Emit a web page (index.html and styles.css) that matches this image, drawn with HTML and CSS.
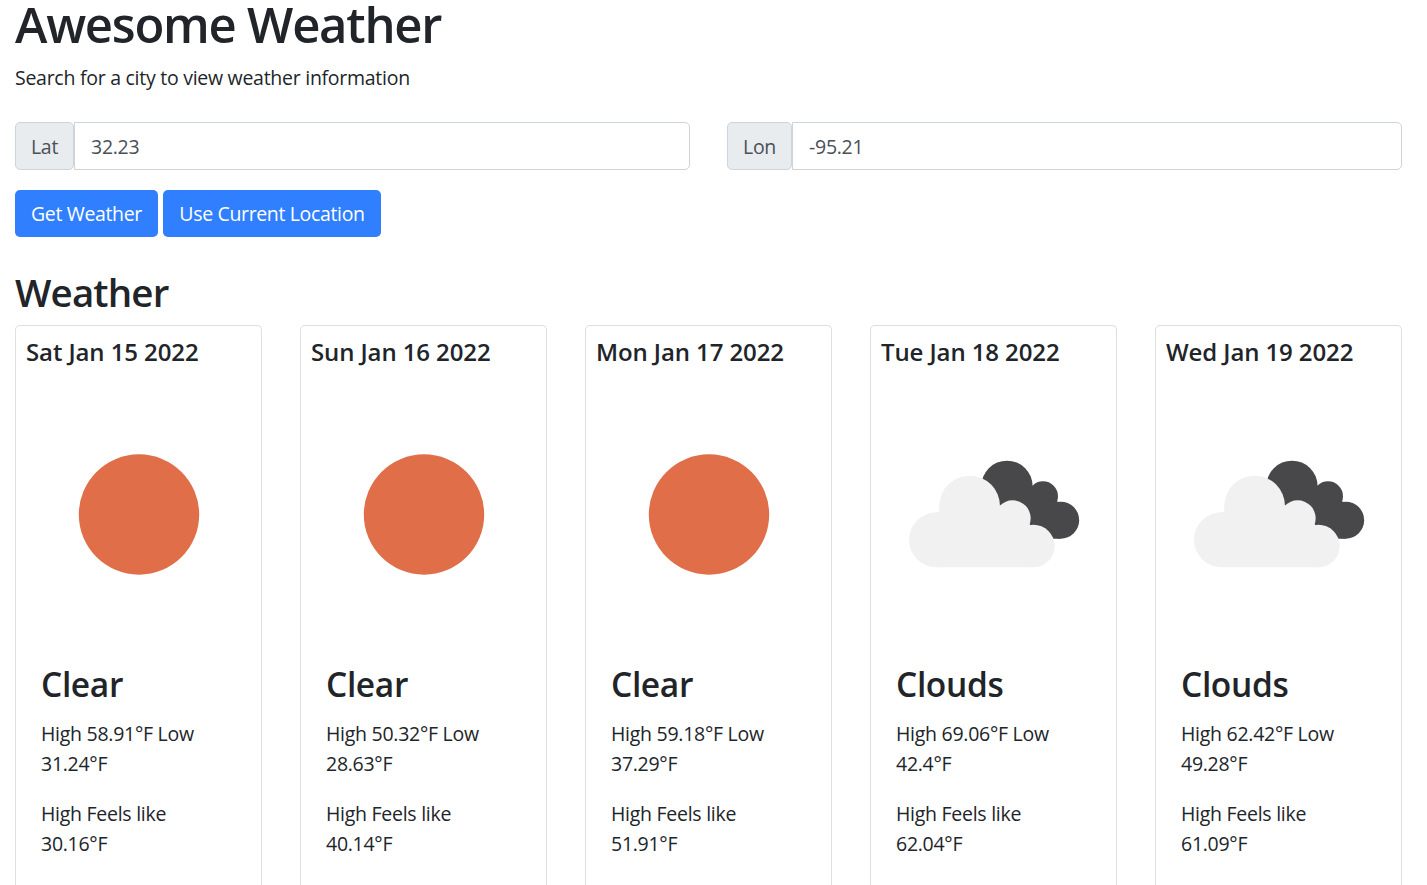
FILE: index.html
```html
<!DOCTYPE html>
<html lang="en">
<head>
<meta charset="utf-8">
<title>Awesome Weather</title>
<link rel="stylesheet" href="styles.css">
</head>
<body>
<svg class="symbols" aria-hidden="true">
  <symbol id="sun" viewBox="0 0 245 245"><circle cx="123" cy="122.5" r="60.2" fill="#e06e48"/></symbol>
  <symbol id="clouds" viewBox="-57 -144 735 735">
    <g fill="#48484a"><circle cx="351" cy="139" r="77"/><circle cx="459" cy="169" r="45"/><circle cx="512" cy="240.500" r="55.500"/><path d="M351 139H428L459 169L504 185L512 296H400L330 190Z"/></g>
    <g fill="#f1f1f1"><circle cx="139.500" cy="299.500" r="82.500"/><circle cx="239" cy="198" r="91"/><circle cx="368" cy="235" r="54"/><circle cx="430" cy="318" r="64"/><path d="M148 198H330V220H368L421 254L430 382H139V217H148Z"/></g>
  </symbol>
</svg>
<main class="page">
  <h1 class="title">Awesome Weather</h1>
  <p class="lead">Search for a city to view weather information</p>
  <form class="search">
    <div class="fields">
      <div class="group"><label class="addon addon-lat" for="lat">Lat</label><input class="input" id="lat" value="32.23"></div>
      <div class="group"><label class="addon addon-lon" for="lon">Lon</label><input class="input" id="lon" value="-95.21"></div>
    </div>
    <div class="actions">
      <button class="btn btn-get" type="button">Get Weather</button>
      <button class="btn btn-loc" type="button">Use Current Location</button>
    </div>
  </form>
  <h2 class="section">Weather</h2>
  <div class="cards">
    <article class="card"><h5 class="date">Sat Jan 15 2022</h5><svg class="icon"><use href="#sun"/></svg><div class="body"><h3 class="state">Clear</h3><p class="text">High 58.91°F Low<br>31.24°F</p><p class="text">High Feels like<br>30.16°F</p></div></article>
    <article class="card"><h5 class="date">Sun Jan 16 2022</h5><svg class="icon"><use href="#sun"/></svg><div class="body"><h3 class="state">Clear</h3><p class="text">High 50.32°F Low<br>28.63°F</p><p class="text">High Feels like<br>40.14°F</p></div></article>
    <article class="card"><h5 class="date">Mon Jan 17 2022</h5><svg class="icon"><use href="#sun"/></svg><div class="body"><h3 class="state">Clear</h3><p class="text">High 59.18°F Low<br>37.29°F</p><p class="text">High Feels like<br>51.91°F</p></div></article>
    <article class="card"><h5 class="date">Tue Jan 18 2022</h5><svg class="icon"><use href="#clouds"/></svg><div class="body"><h3 class="state">Clouds</h3><p class="text">High 69.06°F Low<br>42.4°F</p><p class="text">High Feels like<br>62.04°F</p></div></article>
    <article class="card"><h5 class="date">Wed Jan 19 2022</h5><svg class="icon"><use href="#clouds"/></svg><div class="body"><h3 class="state">Clouds</h3><p class="text">High 62.42°F Low<br>49.28°F</p><p class="text">High Feels like<br>61.09°F</p></div></article>
  </div>
</main>
</body>
</html>
```
FILE: styles.css
```css
* { box-sizing: border-box; }
body { margin: 0; background: #fff; color: #212529; font: 400 19.5px/30px "Segoe UI", "Open Sans", "Noto Sans", sans-serif; letter-spacing: -0.27px; }
h1, h2, h3, h5, p { margin: 0; font-weight: 600; white-space: nowrap; }
.symbols { display: none; }
.page { width: 1417px; padding: 0 15px; }
.title { font-size: 49px; line-height: 48px; padding-bottom: 15px; letter-spacing: -1.25px; }
.lead { font-weight: 400; }
.search { margin-top: 29px; }
.fields { display: grid; grid-template-columns: 675px 675px; gap: 37px; }
.group { display: flex; height: 48px; }
.addon { display: flex; align-items: center; justify-content: center; border: 1px solid #ced4da; border-radius: 5px; background: #e9ecef; color: #495057; padding-top: 2px; }
.addon-lat { width: 59px; }
.addon-lon { width: 65px; }
.input { flex: 1; min-width: 0; border: 1px solid #ced4da; border-radius: 0 5px 5px 0; padding: 2px 16px 0; font: inherit; letter-spacing: inherit; color: #495057; outline: 0; }
.actions { display: flex; gap: 5px; margin-top: 20px; }
.btn { height: 47px; border: 0; border-radius: 5px; background: #2f7fff; color: #fff; font: inherit; letter-spacing: -0.35px; padding: 0; white-space: nowrap; }
.btn-get { width: 143px; }
.btn-loc { width: 218px; }
.section { font-size: 38.5px; line-height: 48px; margin: 31px 0 9px; letter-spacing: -0.85px; }
.cards { display: grid; grid-template-columns: repeat(5, 247px); gap: 38px; }
.card { height: 560px; border: 1px solid #dfdfdf; border-bottom: 0; border-radius: 5px 5px 0 0; }
.date { font-size: 24px; line-height: 30px; padding: 11px 10px 0; height: 66px; letter-spacing: -0.1px; }
.icon { display: block; width: 245px; height: 245px; }
.body { padding: 26px 25px 0; }
.state { font-size: 33.5px; line-height: 42px; margin-bottom: 14px; letter-spacing: -0.35px; }
.text { font-weight: 400; margin-bottom: 20px; }
.text:last-child { margin-bottom: 0; }
```
